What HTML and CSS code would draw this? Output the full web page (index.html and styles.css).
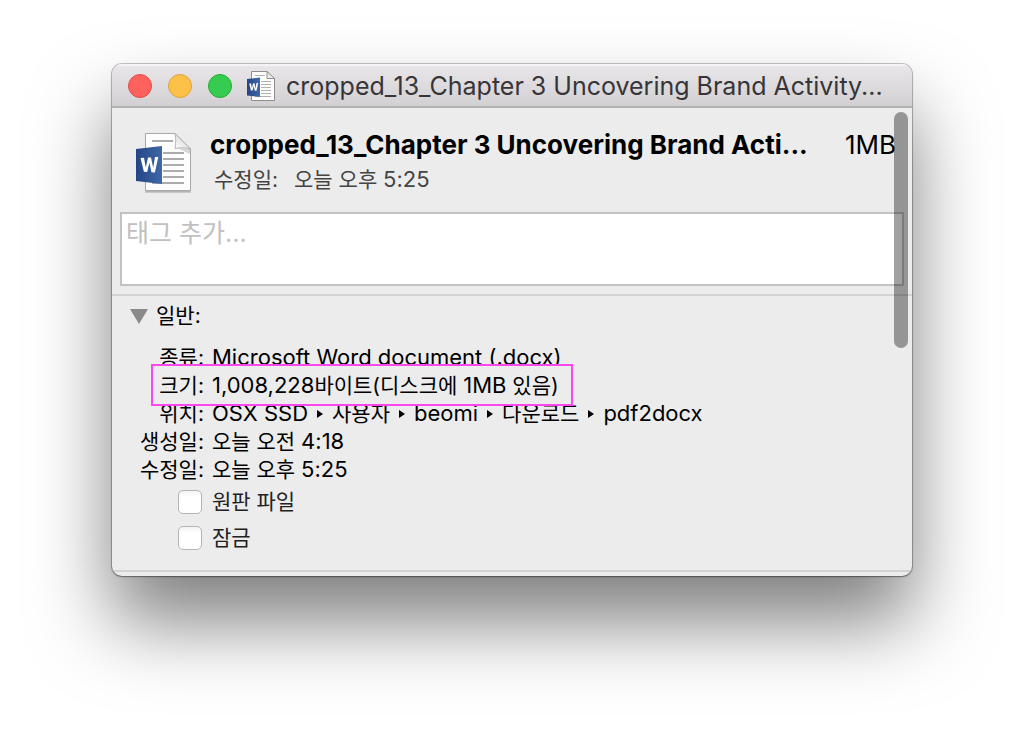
FILE: index.html
```html
<!DOCTYPE html>
<html lang="ko">
<head>
<meta charset="utf-8">
<title>cropped_13_Chapter 3 정보</title>
<link rel="stylesheet" href="styles.css">
</head>
<body>
<svg class="defs" width="0" height="0" aria-hidden="true">
  <defs>
    <linearGradient id="word-blue" x1="0" x2="1" y1="0" y2="0">
      <stop offset="0" stop-color="#234585"/><stop offset="1" stop-color="#3f68a8"/>
    </linearGradient>
    <linearGradient id="fold" x1="0" x2="1" y1="1" y2="0">
      <stop offset="0" stop-color="#ffffff"/><stop offset="0.5" stop-color="#e4e4e4"/><stop offset="1" stop-color="#bdbdbd"/>
    </linearGradient>
    <symbol id="word-doc" viewBox="0 0 56 60">
      <path d="M9.500 1.500H39L54.500 17V58.500H9.500Z" fill="#909090" stroke="#b0b0b0" transform="translate(0 1)" opacity=".6"/>
      <path d="M9.500 0.500H39L54.500 16V57.500H9.500Z" fill="#fdfdfd" stroke="#a9a9a9"/>
      <path d="M16 8H37M27 20H48M27 26H48M27 32H48M27 38H48M27 44H48M16 50H48" stroke="#acacac" stroke-width="2"/>
      <path d="M41 15L54 21V16Z" fill="#c4c4c4" opacity=".7"/>
      <path d="M39 0.500C40 5 40 10 39 15.500C44 14.500 50 14.500 54.500 16Z" fill="url(#fold)" stroke="#a6a6a6" stroke-width=".8"/>
      <path d="M0 16L26 13V51L0 48Z" fill="url(#word-blue)"/>
      <path d="M4.500 25L8 24.800L9.800 34.500L12 24.500H15L17.200 34.800L19 24H22.300L18.900 39.500L15.500 39.300L13.400 29.800L11.200 39L7.900 38.800Z" fill="#fff"/>
    </symbol>
    <symbol id="word-doc-small" viewBox="0 0 28 30">
      <path d="M4.500 .5H20L27.500 8V29.500H4.500Z" fill="#fdfdfd" stroke="#8e8e8e"/>
      <path d="M8 4.500H18M14 10.500H24M14 13.500H24M14 16.500H24M14 19.500H24M14 22.500H24M8 25.500H24" stroke="#b0b0b0"/>
      <path d="M20 .5V7.500H27.500Z" fill="#ececec" stroke="#8e8e8e"/>
      <path d="M0 8L13 6.500V26L0 24.500Z" fill="url(#word-blue)"/>
      <path d="M2.200 12.500H4L4.900 17.300L6 12.300H7.500L8.600 17.400L9.500 12H11.200L9.500 19.800H7.800L6.700 15L5.600 19.600H3.900Z" fill="#fff"/>
    </symbol>
  </defs>
</svg>
<main class="window">
  <header class="titlebar">
    <div class="lights">
      <button class="light close" aria-label="닫기"></button>
      <button class="light minimize" aria-label="최소화"></button>
      <button class="light zoom" aria-label="확대"></button>
    </div>
    <svg class="title-icon" aria-hidden="true"><use href="#word-doc-small"/></svg>
    <h1 class="title">cropped_13_Chapter 3 Uncovering Brand Activity...</h1>
  </header>
  <div class="content">
    <section class="summary">
      <svg class="file-icon" aria-hidden="true"><use href="#word-doc"/></svg>
      <div class="summary-text">
        <div class="name-row">
          <h2 class="name">cropped_13_Chapter 3 Uncovering Brand Acti...</h2>
          <span class="size">1MB</span>
        </div>
        <p class="modified"><span>수정일:</span><span>오늘 오후 <span class="latin">5:25</span></span></p>
      </div>
    </section>
    <textarea class="tags" aria-label="태그" placeholder="태그 추가..."></textarea>
    <section class="general">
      <h3 class="section-title"><button class="disclosure"><svg class="triangle" viewBox="0 0 18 15" aria-hidden="true"><path d="M0 0H18L9 15Z" fill="#8a8a8a"/></svg>일반:</button></h3>
      <dl class="facts">
        <div class="fact"><dt>종류:</dt><dd><span class="latin">Microsoft Word document (.docx)</span></dd></div>
        <div class="fact marked"><dt>크기:</dt><dd><span class="latin">1,008,228</span>바이트(디스크에 <span class="latin">1MB</span> 있음)</dd></div>
        <div class="fact"><dt>위치:</dt><dd class="path">
          <span class="latin">OSX SSD</span><svg class="arrow" viewBox="0 0 6 8" aria-hidden="true"><path d="M0 0L6 4L0 8Z"/></svg>
          <span>사용자</span><svg class="arrow" viewBox="0 0 6 8" aria-hidden="true"><path d="M0 0L6 4L0 8Z"/></svg>
          <span class="latin">beomi</span><svg class="arrow" viewBox="0 0 6 8" aria-hidden="true"><path d="M0 0L6 4L0 8Z"/></svg>
          <span>다운로드</span><svg class="arrow" viewBox="0 0 6 8" aria-hidden="true"><path d="M0 0L6 4L0 8Z"/></svg>
          <span class="latin">pdf2docx</span></dd></div>
        <div class="fact"><dt>생성일:</dt><dd>오늘 오전 <span class="latin">4:18</span></dd></div>
        <div class="fact"><dt>수정일:</dt><dd>오늘 오후 <span class="latin">5:25</span></dd></div>
      </dl>
      <div class="options">
        <label class="option"><input type="checkbox" class="check">원판 파일</label>
        <label class="option"><input type="checkbox" class="check">잠금</label>
      </div>
    </section>
    <div class="scrollbar"></div>
  </div>
</main>
</body>
</html>
```
FILE: styles.css
```css
* { box-sizing: border-box; }
body {
  min-height: 100vh;
  margin: 0;
  padding: 64px 112px;
  background: #fff;
  color: #000;
  font: 21px/28px Inter, "Noto Sans CJK KR", sans-serif;
}
h1, h2, h3, p, dl, dd { margin: 0; }
button { padding: 0; border: 0; background: none; font: inherit; color: inherit; }
.defs { position: absolute; }
.latin { font-size: 22px; line-height: 24px; }
.window {
  border-radius: 10px;
  overflow: hidden;
  background: #ececec;
  box-shadow: 0 0 0 1px rgba(0, 0, 0, .22), 0 1px 2px rgba(0, 0, 0, .3), 0 46px 78px rgba(0, 0, 0, .5);
}
.titlebar {
  display: flex;
  align-items: center;
  height: 44px;
  padding: 2px 16px 0;
  border-bottom: 2px solid #b2b0b2;
  background: linear-gradient(#e9e7e9, #d2d0d2);
  box-shadow: inset 0 2px 0 #f4f3f4;
}
.lights { display: flex; gap: 16px; }
.light { width: 24px; height: 24px; border: 1px solid; border-radius: 50%; }
.close { background: #fd625d; border-color: #e24b47; }
.minimize { background: #fdc148; border-color: #e0a137; }
.zoom { background: #35cc4f; border-color: #27ac36; }
.title-icon { flex: none; width: 28px; height: 30px; margin: 0 11px 0 15px; }
.title {
  min-width: 0;
  overflow: hidden;
  white-space: nowrap;
  color: #373537;
  font-size: 25px;
  font-weight: 400;
  line-height: 36px;
}
.content { position: relative; }
.summary { display: flex; gap: 18px; padding: 20px 16px 18px 24px; }
.file-icon { flex: none; width: 56px; height: 60px; margin-top: 5px; }
.summary-text { flex: 1; min-width: 0; }
.name-row { display: flex; justify-content: space-between; font-size: 26px; line-height: 34px; }
.name { min-width: 0; overflow: hidden; white-space: nowrap; font-size: 26px; font-weight: 700; }
.modified { display: flex; align-items: baseline; gap: 16px; padding-left: 4px; margin-top: 4px; color: #444; }
.tags {
  display: block;
  width: calc(100% - 16px);
  height: 74px;
  margin: 0 8px 8px;
  padding: 2px 4px;
  border: 2px solid #c2c2c2;
  border-radius: 0;
  background: #fff;
  resize: none;
  font: 25px/34px Inter, "Noto Sans CJK KR", sans-serif;
}
.tags::placeholder { color: #c0c0c0; opacity: 1; }
.general { border-top: 2px solid #d3d3d3; padding: 6px 0 18px; border-bottom: 2px solid #d3d3d3; margin-bottom: 4px; }
.section-title { font-size: 21px; font-weight: 400; }
.disclosure { display: flex; align-items: center; gap: 8px; margin-left: 18px; }
.triangle { width: 18px; height: 15px; }
.facts { margin-top: 14px; }
.fact { display: flex; align-items: baseline; gap: 8px; width: fit-content; height: 28px; }
.fact dt { width: 92px; text-align: right; }
.fact dd { white-space: nowrap; }
.marked { position: relative; z-index: 0; }
.marked dt, .marked dd { position: relative; z-index: 1; }
.marked::before {
  content: "";
  position: absolute;
  inset: -8px -14px -6px 39px;
  border: 2px solid #fb48ee;
  background: #ececec;
}
.path { display: flex; align-items: baseline; gap: 9px; }
.arrow { align-self: center; width: 6px; height: 8px; }
.options { display: grid; gap: 8px; padding: 4px 0 0 66px; }
.option { display: flex; align-items: center; gap: 10px; width: fit-content; color: #222; }
.check {
  appearance: none;
  width: 24px;
  height: 24px;
  margin: 0;
  border: 1px solid #b4b4b4;
  border-radius: 5px;
  background: linear-gradient(#f4f4f4, #fff 6px);
}
.scrollbar {
  position: absolute;
  z-index: 2;
  top: 4px;
  right: 4px;
  width: 14px;
  height: 236px;
  border-radius: 7px;
  background: rgba(0, 0, 0, .37);
}
```
